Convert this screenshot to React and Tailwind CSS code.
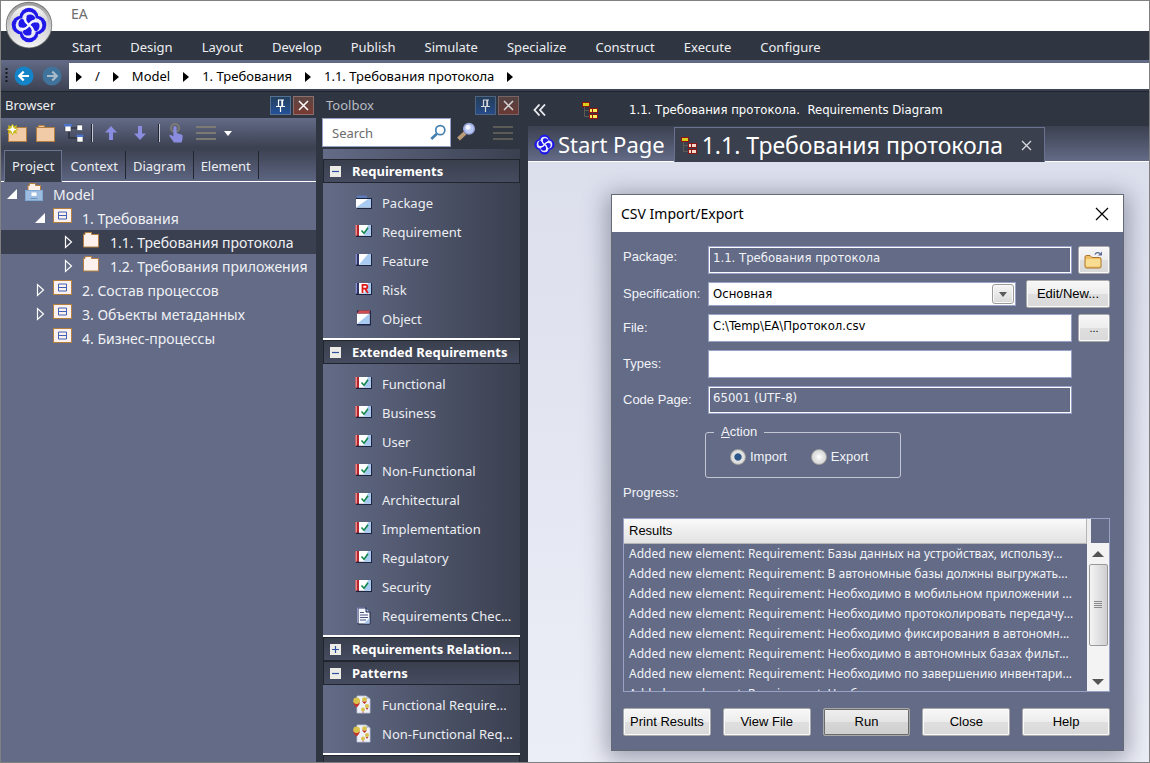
import React from "react";

const menus = ["Start", "Design", "Layout", "Develop", "Publish", "Simulate", "Specialize", "Construct", "Execute", "Configure"];
const crumbs = ["/", "Model", "1. Требования", "1.1. Требования протокола"];

const tree = [
  { label: "Model", pad: "pl-[5px]", twist: "open", icon: "model" },
  { label: "1. Требования", pad: "pl-[33px]", twist: "open", icon: "view" },
  { label: "1.1. Требования протокола", pad: "pl-[61px]", twist: "closed", icon: "folder", selected: true },
  { label: "1.2. Требования приложения", pad: "pl-[61px]", twist: "closed", icon: "folder" },
  { label: "2. Состав процессов", pad: "pl-[33px]", twist: "closed", icon: "view" },
  { label: "3. Объекты метаданных", pad: "pl-[33px]", twist: "closed", icon: "view" },
  { label: "4. Бизнес-процессы", pad: "pl-[33px]", twist: "none", icon: "view" },
];

const groups = [
  {
    title: "Requirements",
    open: true,
    items: [["Package", "package"], ["Requirement", "req"], ["Feature", "feature"], ["Risk", "risk"], ["Object", "object"]],
  },
  {
    title: "Extended Requirements",
    open: true,
    items: [
      ["Functional", "req"], ["Business", "req"], ["User", "req"], ["Non-Functional", "req"], ["Architectural", "req"],
      ["Implementation", "req"], ["Regulatory", "req"], ["Security", "req"], ["Requirements Chec...", "doc"],
    ],
  },
  { title: "Requirements Relation...", open: false, items: [] },
  { title: "Patterns", open: true, items: [["Functional Require...", "pattern"], ["Non-Functional Req...", "pattern"]] },
  { title: "", open: true, items: [] },
];

const results = [
  "Added new element: Requirement: Базы данных на устройствах, использу...",
  "Added new element: Requirement: В автономные базы должны выгружать...",
  "Added new element: Requirement: Необходимо в мобильном приложении ...",
  "Added new element: Requirement: Необходимо протоколировать передачу...",
  "Added new element: Requirement: Необходимо фиксирования в автономн...",
  "Added new element: Requirement: Необходимо в автономных базах фильт...",
  "Added new element: Requirement: Необходимо по завершению инвентари...",
  "Added new element: Requirement: Необ",
];

function Knot() {
  const lobes = [15, 105, 195, 285];
  return (
    <g>
      {[0, 90, 180, 270].map((a) => (
        <circle key={a} cx="0" cy="-7.5" r="8.8" fill="#2018e8" transform={`rotate(${a})`} />
      ))}
      {[0, 90, 180, 270].map((a) => (
        <circle key={a} cx="0" cy="-6.2" r="6.4" fill="#e6e8fa" transform={`rotate(${a})`} />
      ))}
      {lobes.map((a) => (
        <path key={a} d="M0-1.2C-4-2-4.9-6.5-4-8.4C-2-10.8 2.8-10.6 4-7.8C4.4-6 1-4.6 0-1.2Z" fill="#2018e8" transform={`rotate(${a})`} />
      ))}
      {lobes.map((a) => (
        <path key={a} d="M0 0C1-4 3.5-5.5 6.5-5" fill="none" stroke="#f4f5ff" strokeWidth="1.7" transform={`rotate(${a})`} />
      ))}
    </g>
  );
}

function Logo() {
  return (
    <svg width="48" height="48" viewBox="-24 -24 48 48" aria-hidden="true">
      <defs>
        <linearGradient id="rim" x1="0" y1="0" x2="0" y2="1">
          <stop offset="0" stopColor="#9b9b9b" />
          <stop offset="0.5" stopColor="#c9c9c9" />
          <stop offset="1" stopColor="#f4f4f4" />
        </linearGradient>
        <linearGradient id="face" x1="0" y1="0" x2="0" y2="1">
          <stop offset="0" stopColor="#fbfbfb" />
          <stop offset="0.45" stopColor="#cfcfd2" />
          <stop offset="1" stopColor="#ededf0" />
        </linearGradient>
      </defs>
      <circle r="23.2" fill="#6f7174" />
      <circle r="22.4" fill="url(#rim)" />
      <circle r="19.5" fill="url(#face)" />
      <g transform="scale(1.06)"><Knot /></g>
    </svg>
  );
}

function NavArrow({ dim, flip }) {
  return (
    <svg width="20" height="20" viewBox="0 0 20 20" aria-hidden="true">
      <circle cx="10" cy="10" r="9.5" fill={dim ? "#40739c" : "#1583c8"} />
      <path d="M15 10H6M9.7 5.6L5.2 10l4.5 4.4" transform={flip ? "translate(20 0) scale(-1 1)" : undefined} fill="none" stroke={dim ? "#a9bccb" : "#fff"} strokeWidth="2.2" />
    </svg>
  );
}

function Triangle() {
  return (
    <svg width="6" height="10" viewBox="0 0 6 10" className="shrink-0" aria-hidden="true">
      <path d="M0 0L6 5L0 10Z" fill="#000" />
    </svg>
  );
}

function PanelButtons({ muted }) {
  return (
    <div className="flex gap-0.5">
      <button type="button" aria-label="Pin" className={`flex h-[19px] w-[21px] items-center justify-center border border-[#56708f] bg-gradient-to-b from-[#22405f] to-[#24509a] ${muted ? "opacity-80" : ""}`}>
        <svg width="11" height="13" viewBox="0 0 11 13" aria-hidden="true">
          <path d="M3 1H9M3.5 1V7M7.5 1V7M6.9 1V7M1 7.5H10M5.5 7.5V13" fill="none" stroke="#fff" strokeWidth="1.2" />
        </svg>
      </button>
      <button type="button" aria-label="Close" className={`flex h-[19px] w-[21px] items-center justify-center border border-[#8c6f6c] bg-gradient-to-b from-[#5c4644] to-[#7a3a32] ${muted ? "opacity-80" : ""}`}>
        <svg width="11" height="11" viewBox="0 0 11 11" aria-hidden="true">
          <path d="M1 1L10 10M10 1L1 10" stroke="#fff" strokeWidth="1.5" />
        </svg>
      </button>
    </div>
  );
}

function Lines({ color }) {
  return (
    <svg width="20" height="14" viewBox="0 0 20 14" aria-hidden="true">
      <path d="M0 1H20M0 7H20M0 13H20" stroke={color} strokeWidth="2" />
    </svg>
  );
}

function ToolFolder({ star }) {
  return (
    <svg width="21" height="19" viewBox="0 0 21 19" aria-hidden="true">
      {!star && <path d="M3.5 4V1.5H9.5V4" fill="#ecc8a4" stroke="#b5803f" />}
      <rect x="1.5" y="3.5" width="18" height="14" fill="#f1cba8" stroke="#b5803f" />
      {star && (
        <g transform="translate(5.5 5.5)">
          <path d="M0-6L1.6-3.2L4.6-4.4L3.6-1.4L6 0L3.6 1.4L4.6 4.4L1.6 3.2L0 6L-1.6 3.2L-4.6 4.4L-3.6 1.4L-6 0L-3.6-1.4L-4.6-4.4L-1.6-3.2Z" fill="#c9b91a" />
          <path d="M0-4.5L1.2-1.2L4.5 0L1.2 1.2L0 4.5L-1.2 1.2L-4.5 0L-1.2-1.2Z" fill="#fff" />
        </g>
      )}
    </svg>
  );
}

function DiagramNodes() {
  return (
    <svg width="20" height="19" viewBox="0 0 20 19" aria-hidden="true">
      <path d="M6 4H13M5 8V14H13" fill="none" stroke="#22262f" strokeWidth="1.2" />
      <g fill="#fff" stroke="#3a3f4b" strokeWidth="0.6">
        <rect x="1" y="1" width="6" height="6.5" />
        <rect x="13" y="1" width="5.5" height="5.5" />
        <rect x="13" y="11" width="6" height="7" />
      </g>
      <path d="M0 0H8V2.4H0ZM12.5 10.5H19.5V13H12.5Z" fill="#4c74c8" />
    </svg>
  );
}

function Arrow({ down }) {
  return (
    <svg width="12" height="14" viewBox="0 0 12 14" aria-hidden="true">
      <path d="M6 0L12 6.5H8V14H4V6.5H0Z" fill="#8a8ce0" transform={down ? "rotate(180 6 7)" : undefined} />
    </svg>
  );
}

function Hand() {
  return (
    <svg width="16" height="20" viewBox="0 0 16 20" aria-hidden="true">
      <circle cx="7" cy="5" r="4" fill="none" stroke="#7b7975" strokeWidth="2.2" />
      <path d="M5.4 4.5C5.4 2.8 8.6 2.8 8.6 4.5V10L14 11.8C15 12.3 14.8 16.5 13.5 19.5H6L1.2 12.8C1.6 11.4 3.8 11.8 5.4 13.5Z" fill="#8a8ce0" />
    </svg>
  );
}

function Twist({ kind }) {
  if (kind === "open") {
    return (
      <svg width="12" height="12" viewBox="0 0 12 12" className="shrink-0" aria-hidden="true">
        <path d="M11 1V11H1Z" fill="#fff" />
      </svg>
    );
  }
  if (kind === "closed") {
    return (
      <svg width="12" height="14" viewBox="0 0 12 14" className="shrink-0" aria-hidden="true">
        <path d="M3.5 1.5V12.5L9.5 7Z" fill="none" stroke="#fff" strokeWidth="1.2" />
      </svg>
    );
  }
  return <span className="w-3 shrink-0" />;
}

function TreeIcon({ kind }) {
  if (kind === "model") {
    return (
      <svg width="18" height="18" viewBox="0 0 18 18" className="mb-1 shrink-0" aria-hidden="true">
        <path d="M3 9V2.5H4.5V0.5H10.5V2.5H15.5V9Z" fill="#fdf1e8" stroke="#b5803f" />
        <rect x="0.5" y="7.5" width="17" height="10" fill="#9dbde0" stroke="#7fa8d2" />
        <rect x="6.5" y="9.5" width="5" height="3.4" fill="#fff" />
        <path d="M5.5 15.5H12.5" stroke="#6d93c0" />
      </svg>
    );
  }
  if (kind === "view") {
    return (
      <svg width="19" height="16" viewBox="0 0 19 16" className="mb-1 shrink-0" aria-hidden="true">
        <rect x="0.5" y="0.5" width="18" height="14" fill="#fdf1ee" stroke="#b5803f" />
        <path d="M5.5 4H13.5V11H5.5ZM5.5 7.5H13.5" fill="none" stroke="#3d62b5" />
      </svg>
    );
  }
  return (
    <svg width="19" height="16" viewBox="0 0 19 16" className="mb-1 shrink-0" aria-hidden="true">
      <path d="M2.5 15V2.5H4V0.5H10.5V2.5H17.5V15Z" fill="#fdf1ee" stroke="#b5803f" />
    </svg>
  );
}

function ToolIcon({ kind }) {
  if (kind === "doc") {
    return (
      <svg width="18" height="18" viewBox="0 0 18 18" className="shrink-0" aria-hidden="true">
        <path d="M3 1H11L15 5V17H3Z" fill="#f6f8ff" stroke="#1d2440" />
        <path d="M2.5 16V1H10" fill="none" stroke="#8e96c8" />
        <path d="M11 1V5H15" fill="#9db6e6" stroke="#1d2440" />
        <path d="M5 5.5H9M5 8H13M5 10.5H13M5 13H11" stroke="#49557c" />
        <path d="M9 16.5L14.5 11V16.5Z" fill="#a9c8f0" />
      </svg>
    );
  }
  if (kind === "pattern") {
    return (
      <svg width="18" height="19" viewBox="0 0 18 19" className="-ml-0.5 mr-0.5 shrink-0" aria-hidden="true">
        <path d="M4 1H13L17 4V18H4Z" fill="#eef1f8" stroke="#c2c8d8" strokeWidth="0.8" />
        <path d="M13 1V4H17" fill="#b8c4dc" />
        <circle cx="3.6" cy="6" r="3.4" fill="#d9c24a" />
        <path d="M0.4 7C2 9.8 5.2 9.8 6.8 7C6.8 10 5 11 3.6 12.5C2.2 11 0.4 10 0.4 7Z" fill="#c2352c" />
        <circle cx="11.5" cy="4.6" r="2.4" fill="#d9c24a" />
        <path d="M9.2 5.2C10.4 7.4 12.6 7.4 13.8 5.2C13.6 7.6 12.4 8 11.5 9C10.6 8 9.4 7.6 9.2 5.2Z" fill="#c2352c" />
        <circle cx="14" cy="11" r="2" fill="#d9c24a" />
        <path d="M12 11.6C13 13.6 15 13.6 16 11.6L14 15Z" fill="#c2352c" />
        <circle cx="10" cy="14.6" r="2" fill="#d9c24a" />
        <path d="M8 15.2C9 17.2 11 17.2 12 15.2L10 18Z" fill="#c2352c" />
      </svg>
    );
  }
  if (kind === "object") {
    return (
      <svg width="18" height="18" viewBox="0 0 18 18" className="mb-0.5 shrink-0" aria-hidden="true">
        <rect x="2" y="1.5" width="14" height="15" fill="#20264a" />
        <rect x="2" y="4.5" width="12.5" height="10.5" fill="#fff" />
        <path d="M2 15L14.5 4.5V15Z" fill="#a9cbf2" />
        <path d="M2 4.5L4 1.5H15L14.5 4.5Z" fill="#d04a50" />
      </svg>
    );
  }
  const left = kind === "req" || kind === "risk";
  return (
    <svg width="18" height="14" viewBox="0 0 18 14" className="mb-0.5 shrink-0" aria-hidden="true">
      {kind === "package" ? (
        <g>
          <path d="M2 0.5H12V4H2Z" fill="#5d79b8" />
          <path d="M1 3H17V14H2Z" fill="#1d2440" />
          <rect x="1" y="4" width="15" height="8.6" fill="#fff" />
          <path d="M1 12.6L13 4H16V12.6Z" fill="#a9cbf2" />
        </g>
      ) : (
        <g>
          <path d="M1 1H17V13H1Z" fill="#1d2440" />
          <rect x="0.5" y="1" width="4" height="10.6" fill={kind === "req" ? "#b8242c" : "#2e3468"} />
          <rect x="0.5" y="1" width="1.5" height="10.6" fill={kind === "req" ? "#ea8c8c" : "#8a90c8"} />
          <rect x="4" y="1" width="12" height="10.8" fill="#fff" />
          <path d={left ? "M13 1H16V11.8H9Z" : "M4 11.8L13 1H16V11.8Z"} fill="#a9cbf2" />
          {kind === "req" && <path d="M6.5 6.5L9 9.2L13 3.8" fill="none" stroke="#12884a" strokeWidth="1.6" />}
          {kind === "risk" && <path d="M7.5 11V2.8H10.5C13 2.8 13 6.6 10.5 6.6H7.5M10 6.6L13 11" fill="none" stroke="#e01818" strokeWidth="1.8" />}
        </g>
      )}
    </svg>
  );
}

function Expander({ open }) {
  return (
    <svg width="11" height="11" viewBox="0 0 11 11" className="shrink-0" aria-hidden="true">
      <rect width="11" height="11" fill="#ecebe6" />
      <path d={open ? "M2 5.5H9" : "M2 5.5H9M5.5 2V9"} stroke="#2f4f9f" strokeWidth="1.2" />
    </svg>
  );
}

function Magnifier({ color, glass }) {
  return (
    <svg width="19" height="19" viewBox="0 0 19 19" aria-hidden="true">
      <path d="M1.5 17L8 11" stroke={glass ? "#b99a78" : color} strokeWidth={glass ? "4" : "3.2"} />
      <circle cx="12" cy="6.8" r="5.3" fill={glass || "#fff"} stroke={color} strokeWidth={glass ? "1.4" : "2"} />
      {glass && <circle cx="11" cy="5.4" r="2.4" fill="#f2f5ff" />}
    </svg>
  );
}

function Hierarchy({ leaf }) {
  return (
    <svg width="17" height="17" viewBox="0 0 17 17" aria-hidden="true">
      <path d="M2.5 4V14.5H8M2.5 8.5H8" fill="none" stroke="#5c5a52" />
      <rect x="0" y="0" width="8" height="5" fill="#8f1414" />
      <rect x="1" y="1" width="6" height="3" fill="#d8cf1c" />
      <path d="M7 6H16V11H7ZM7 12H16V17H7Z" fill="#8f1414" />
      <path d="M8 7H10V10H8ZM11 7H15V10H11ZM8 13H10V16H8ZM11 13H15V16H11Z" fill={leaf} />
    </svg>
  );
}

const btnShape = "rounded-[2px] border text-black";
const btn = `${btnShape} border-[#a9a9a9] bg-[linear-gradient(to_bottom,#f7f7f7_0%,#ededed_50%,#dfdfdf_50%,#d9d9d9_100%)] shadow-[inset_0_0_0_1px_#fafafa]`;
const btnDefault = `${btnShape} border-[#a9a9a9] bg-[linear-gradient(to_bottom,#efefef_0%,#e4e4e4_50%,#d6d6d6_50%,#cfcfcf_100%)] shadow-[inset_0_0_0_1px_#6b6b6b]`;
const label = "text-[13px] leading-5 text-[#f2f3f7]";
const field = "block h-7 w-full border border-[#98a2c6] px-1 pb-1.5 text-[13px] font-['DejaVu_Sans_Condensed','DejaVu_Sans',sans-serif]";

function Dialog() {
  return (
    <section role="dialog" aria-label="CSV Import/Export" className="absolute left-[83px] top-8 w-[513px] border border-[#666a75] bg-[#636b87] font-['Liberation_Sans',Arial,sans-serif] shadow-[0_4px_22px_4px_rgba(40,44,70,0.4)]">
      <header className="flex h-[37px] items-center justify-between bg-white pl-[9px] pr-[14px]">
        <h2 className="font-['Noto_Sans',sans-serif] text-sm text-black">CSV Import/Export</h2>
        <button type="button" aria-label="Close dialog">
          <svg width="14" height="14" viewBox="0 0 14 14" aria-hidden="true">
            <path d="M1 1L13 13M13 1L1 13" stroke="#000" strokeWidth="1.2" />
          </svg>
        </button>
      </header>

      <form className="pb-[14px] pl-[11px] pr-[13px] pt-[14px]" onSubmit={(e) => e.preventDefault()}>
        <div className="grid grid-cols-[85px_1fr]">
          <label htmlFor="pkg" className={`${label} pt-px`}>Package:</label>
          <div className="flex gap-[6px]">
            <input id="pkg" readOnly defaultValue="1.1. Требования протокола" className={`${field} min-w-0 flex-1 bg-[#636b87] text-[#f2f3f7] shadow-[inset_0_0_0_1px_#fff]`} />
            <button type="button" aria-label="Browse package" className={`${btn} flex h-7 w-8 items-center justify-center`}>
              <svg width="20" height="19" viewBox="0 0 20 19" aria-hidden="true">
                <path d="M1 6Q1 4.5 2.5 4.5H6L8 6.5H15.5Q17 6.5 17 8V15.5Q17 17 15.5 17H2.5Q1 17 1 15.5Z" fill="#eec063" stroke="#a8742a" />
                <path d="M1.8 9Q1.8 8 3 8H15Q16.3 8 16.3 9V14Q16.3 15.5 15 15.5H3Q1.8 15.5 1.8 14Z" fill="#f8dc92" />
                <path d="M11 3.5C12 1.5 14 1 16 2.5" fill="none" stroke="#5d6a96" strokeWidth="1.4" />
                <path d="M18 0.5V4.5H14Z" fill="#5d6a96" />
              </svg>
            </button>
          </div>
        </div>

        <div className="my-1.5 grid grid-cols-[85px_1fr] items-center">
          <label htmlFor="spec" className={label}>Specification:</label>
          <div className="flex items-center gap-2.5">
            <div className="relative flex-1">
              <select id="spec" defaultValue="main" className="block h-6 w-full appearance-none border border-[#98a2c6] bg-white px-1 font-['DejaVu_Sans_Condensed','DejaVu_Sans',sans-serif] text-[13px] text-black">
                <option value="main">Основная</option>
              </select>
              <span className="pointer-events-none absolute right-0.5 top-0.5 flex h-5 w-[22px] items-center justify-center rounded-[3px] border border-[#9b9b9b] bg-gradient-to-b from-[#f6f6f6] to-[#dadada] shadow-[inset_0_0_0_1px_#fafafa]">
                <svg width="8" height="5" viewBox="0 0 8 5" aria-hidden="true">
                  <path d="M0 0H8L4 5Z" fill="#5a5a5a" />
                </svg>
              </span>
            </div>
            <button type="button" className={`${btn} h-7 w-[84px] text-[13px]`}>Edit/New...</button>
          </div>
        </div>

        <div className="grid grid-cols-[85px_1fr] items-center gap-y-2">
          <label htmlFor="file" className={label}>File:</label>
          <div className="flex gap-[6px]">
            <input id="file" defaultValue="C:\Temp\EA\Протокол.csv" className={`${field} min-w-0 flex-1 bg-white text-black`} />
            <button type="button" aria-label="Browse file" className={`${btn} h-7 w-8 text-[11px]`}>...</button>
          </div>
          <label htmlFor="types" className={label}>Types:</label>
          <div className="pr-[38px]">
            <input id="types" defaultValue="" className={`${field} bg-white text-black`} />
          </div>
          <label htmlFor="cp" className={label}>Code Page:</label>
          <div className="pr-[38px]">
            <input id="cp" readOnly defaultValue="65001 (UTF-8)" className={`${field} bg-[#636b87] text-[#f2f3f7] shadow-[inset_0_0_0_1px_#fff]`} />
          </div>
        </div>

        <fieldset className="ml-[82px] mt-2 h-14 w-[196px] rounded-[3px] border border-[#c3c7d3] px-2">
          <legend className={`${label} px-[7px]`}>
            <span className="underline">A</span>ction
          </legend>
          <div className="flex gap-6 pl-4 pt-[5px]">
            {["Import", "Export"].map((name, i) => (
              <label key={name} className="flex items-center gap-1 text-[13px] leading-5 text-[#f2f3f7]">
                <input
                  type="radio"
                  name="action"
                  defaultChecked={i === 0}
                  className="size-4 appearance-none rounded-full border border-[#a3a39f] bg-[radial-gradient(circle,#ffffff_0%,#e2e2e2_45%,#cfcfcf_100%)] checked:bg-[radial-gradient(circle,#2c5689_0%,#2c5689_32%,#e4e4e4_42%,#d2d2d2_100%)]"
                />
                {name}
              </label>
            ))}
          </div>
        </fieldset>

        <p className={`${label} mt-[5px]`}>Progress:</p>

        <div className="mt-[15px] flex h-[174px] overflow-hidden border border-[#98a2c6]">
          <div className="min-w-0 flex-1">
            <table className="w-full table-fixed border-collapse text-left">
              <thead>
                <tr>
                  <th className="h-6 border-b border-r border-b-[#b5b5b5] border-r-[#b5b5b5] bg-gradient-to-b from-[#fafafa] to-[#e2e2e2] px-[5px] py-0 text-[13px] font-normal leading-none text-black">Results</th>
                </tr>
              </thead>
              <tbody>
                {results.map((r) => (
                  <tr key={r}>
                    <td className="h-5 whitespace-nowrap py-0 pl-[5px] pr-0 font-['Noto_Sans',sans-serif] text-xs leading-5 text-[#f2f3f7]">{r}</td>
                  </tr>
                ))}
              </tbody>
            </table>
          </div>
          <div className="flex w-[22px] flex-col">
            <div className="h-6 w-1 shrink-0 bg-[#ededed]" />
            <div className="flex flex-1 flex-col items-center bg-[#f3f3f3]" aria-hidden="true">
              <span className="flex h-[21px] items-center">
                <svg width="12" height="6" viewBox="0 0 12 6"><path d="M0 6H12L6 0Z" fill="#555" /></svg>
              </span>
              <span className="flex h-[82px] w-[19px] items-center justify-center rounded-[2px] border border-[#999] bg-gradient-to-r from-[#f4f4f4] to-[#cfcfd2]">
                <svg width="8" height="8" viewBox="0 0 8 8"><path d="M0 .5H8M0 2.5H8M0 4.5H8M0 6.5H8" stroke="#8a8a8a" /></svg>
              </span>
              <span className="mt-auto flex h-[18px] items-center">
                <svg width="12" height="6" viewBox="0 0 12 6"><path d="M0 0H12L6 6Z" fill="#555" /></svg>
              </span>
            </div>
          </div>
        </div>

        <div className="mt-4 flex gap-3">
          {["Print Results", "View File", "Run", "Close", "Help"].map((name) => (
            <button
              key={name}
              type={name === "Run" ? "submit" : "button"}
              className={`${name === "Run" ? btnDefault : btn} h-7 flex-1 whitespace-nowrap text-[13px]`}
            >
              {name}
            </button>
          ))}
        </div>
      </form>
    </section>
  );
}

function Browser() {
  return (
    <aside className="flex w-[315px] shrink-0 flex-col">
      <header className="flex h-[26px] shrink-0 items-center justify-between bg-[#303641] pl-1 pr-0.5 text-[13px] text-[#eceef2]">
        <h2 className="pt-0.5">Browser</h2>
        <PanelButtons />
      </header>
      <div className="flex h-[30px] shrink-0 items-center bg-gradient-to-b from-[#636b87] to-[#3c4151] pl-1.5">
        <button type="button" aria-label="New package"><ToolFolder star /></button>
        <button type="button" aria-label="New folder" className="ml-[7px]"><ToolFolder /></button>
        <button type="button" aria-label="New diagram" className="ml-2"><DiagramNodes /></button>
        <span className="ml-[7px] h-[18px] w-0.5 border-l border-r border-l-[#20242d] border-r-[#c3c7d6]" />
        <button type="button" aria-label="Move up" className="ml-3"><Arrow /></button>
        <button type="button" aria-label="Move down" className="ml-[17px]"><Arrow down /></button>
        <span className="ml-3 h-[18px] w-0.5 border-l border-r border-l-[#20242d] border-r-[#c3c7d6]" />
        <button type="button" aria-label="Select" className="ml-2"><Hand /></button>
        <button type="button" aria-label="Options" className="ml-3 flex items-center gap-2">
          <Lines color="#7d7a74" />
          <svg width="8" height="5" viewBox="0 0 8 5" aria-hidden="true"><path d="M0 0H8L4 5Z" fill="#fff" /></svg>
        </button>
      </div>
      <nav className="flex h-[34px] shrink-0 items-end border-b border-white bg-gradient-to-b from-[#3c4151] to-[#5d6581] pl-[3px] text-[13px] text-[#eceef2]">
        {["Project", "Context", "Diagram", "Element"].map((t, i) => (
          <button
            key={t}
            type="button"
            className={i === 0 ? "-mb-px mr-px h-8 border border-b-0 border-[#69728f] bg-[#383e4b] px-[7px]" : "mb-0.5 h-7 border-r border-[#22262f] px-[7px] pt-[3px]"}
          >
            {t}
          </button>
        ))}
      </nav>
      <ul className="flex-1 overflow-hidden bg-[#636b87] text-sm text-[#f0f1f5]">
        {tree.map((n) => (
          <li key={n.label} className={`flex h-6 items-center gap-2.5 whitespace-nowrap ${n.pad} ${n.selected ? "bg-[#3b4050]" : ""}`}>
            <span className="flex items-center gap-[7px]">
              <Twist kind={n.twist} />
              <TreeIcon kind={n.icon} />
            </span>
            <span className="pt-0.5">{n.label}</span>
          </li>
        ))}
      </ul>
    </aside>
  );
}

function Toolbox() {
  return (
    <aside className="ml-1.5 mr-2 flex w-[198px] shrink-0 flex-col">
      <header className="flex h-[26px] shrink-0 items-center justify-between pl-1 pr-px text-[13px] text-[#b9bcc4]">
        <h2 className="pt-0.5">Toolbox</h2>
        <PanelButtons muted />
      </header>
      <div className="flex h-[31px] shrink-0 items-start">
        <div className="flex h-[29px] w-[129px] items-center border border-[#98a2c6] bg-white pl-[9px] pr-1">
          <input aria-label="Search" placeholder="Search" className="w-full min-w-0 bg-transparent pt-0.5 text-[13px] outline-none placeholder:text-[#6b6b6b]" />
          <Magnifier color="#4480b0" />
        </div>
        <button type="button" aria-label="Find item" className="ml-1.5 mt-1"><Magnifier color="#9aa6dc" glass="#b9c8f4" /></button>
        <button type="button" aria-label="Toolbox menu" className="ml-[17px] mt-2"><Lines color="#5b5a57" /></button>
      </div>
      <div className="ml-px min-h-0 flex-1 overflow-hidden bg-gradient-to-r from-[#636b87] to-[#3b4050] pt-2.5">
        {groups.map((g) => (
          <section key={g.title} className={g.items.length ? "border-b-2 border-white" : ""}>
            <h3 className="flex h-6 items-center gap-[11px] border border-[#22252d] bg-gradient-to-b from-[#3a3f4d] to-[#464c60] pl-1.5 text-[13px] font-bold text-white">
              <Expander open={g.open} />
              <span className="whitespace-nowrap pt-px">{g.title}</span>
            </h3>
            {g.items.length > 0 && (
              <ul className="py-[5px] text-[13px] text-[#eceef2]">
                {g.items.map(([name, icon]) => (
                  <li key={name} className="flex h-[29px] items-center gap-[9px] pl-8">
                    <ToolIcon kind={icon} />
                    <span className="whitespace-nowrap pt-0.5">{name}</span>
                  </li>
                ))}
              </ul>
            )}
          </section>
        ))}
      </div>
    </aside>
  );
}

export default function App() {
  return (
    <div className="flex h-screen min-h-[600px] flex-col overflow-hidden border border-[#808080] bg-[#303641] font-['Noto_Sans',sans-serif]">
      <header className="relative shrink-0">
        <div className="flex h-[30px] items-center bg-white pl-[70px] text-sm text-[#6d6d6d]">
          <h1 className="pb-1">EA</h1>
        </div>
        <button type="button" aria-label="Application menu" className="absolute left-1 top-0"><Logo /></button>
        <nav className="flex h-[29px] items-center gap-[29px] bg-[#303641] pl-[71px] pt-1 text-[13px] text-[#eceef2]">
          {menus.map((m) => (
            <button key={m} type="button">{m}</button>
          ))}
        </nav>
      </header>

      <div className="flex h-8 shrink-0 items-center border-b border-[#20242c] bg-gradient-to-b from-[#636b87] to-[#3c4151]">
        <svg width="3" height="16" viewBox="0 0 3 16" className="ml-1" aria-hidden="true">
          <path d="M1.5 0V16" stroke="#14171d" strokeWidth="2" strokeDasharray="2 2" />
        </svg>
        <button type="button" aria-label="Back" className="ml-1.5"><NavArrow /></button>
        <button type="button" aria-label="Forward" className="ml-2"><NavArrow dim flip /></button>
        <nav className="ml-[7px] flex h-[26px] flex-1 items-center bg-white pl-[7px] pt-0.5 text-[13px] text-black">
          <Triangle />
          {crumbs.map((c) => (
            <span key={c} className="flex items-center">
              <a href="#" className="px-[13px]">{c}</a>
              <Triangle />
            </span>
          ))}
        </nav>
      </div>

      <div className="flex min-h-0 flex-1">
        <Browser />
        <Toolbox />
        <main className="flex min-w-0 flex-1 flex-col">
          <div className="flex h-[34px] shrink-0 items-center bg-[#303641] pl-[5px] pt-0.5 font-['DejaVu_Sans_Condensed','DejaVu_Sans',sans-serif] text-[13px] text-white">
            <button type="button" aria-label="Collapse">
              <svg width="13" height="12" viewBox="0 0 13 12" aria-hidden="true">
                <path d="M6.5 0.5L1.5 6L6.5 11.5M12 0.5L7 6L12 11.5" fill="none" stroke="#eceef2" strokeWidth="1.8" />
              </svg>
            </button>
            <span className="ml-9"><Hierarchy leaf="#f5ef5a" /></span>
            <span className="ml-[30px] whitespace-pre">1.1. Требования протокола.  Requirements Diagram</span>
          </div>
          <nav className="flex h-9 shrink-0 items-end border-b border-white bg-gradient-to-b from-[#3c4151] to-[#636b87] text-[22px] leading-8 text-white">
            <button type="button" className="flex h-[34px] items-center gap-[3px] whitespace-nowrap pl-1.5 pr-[9px]">
              <svg width="21" height="21" viewBox="-17 -17 34 34" aria-hidden="true"><Knot /></svg>
              Start Page
            </button>
            <div className="-mb-px flex h-[35px] items-center border border-b-0 border-[#69728f] bg-[#3a404d] pl-1.5 pr-3 text-[23px]">
              <button type="button" className="flex items-center gap-1 whitespace-nowrap">
                <Hierarchy leaf="#f3d9c9" />
                1.1. Требования протокола
              </button>
              <button type="button" aria-label="Close tab" className="ml-[18px]">
                <svg width="11" height="11" viewBox="0 0 11 11" aria-hidden="true">
                  <path d="M1 1L10 10M10 1L1 10" stroke="#d8dae0" strokeWidth="1.3" />
                </svg>
              </button>
            </div>
          </nav>
          <div className="relative flex-1 overflow-hidden bg-gradient-to-b from-[#dcdfec] to-[#eceef7]">
            <Dialog />
          </div>
        </main>
      </div>
    </div>
  );
}
